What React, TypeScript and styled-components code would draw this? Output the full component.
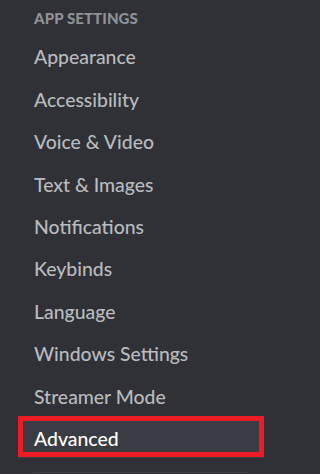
import React from "react";
import styled, { createGlobalStyle } from "styled-components";

const Global = createGlobalStyle`
  html, body {
    margin: 0;
    padding: 0;
    background: #2f3136;
  }
  body {
    font-family: Lato, "Noto Sans", sans-serif;
    -webkit-font-smoothing: antialiased;
  }
`;

const Sidebar = styled.nav`
  width: 275px;
  height: 474px;
  box-sizing: border-box;
  padding-top: 9px;
  background: #2f3136;
  overflow: hidden;
`;

const Header = styled.div`
  margin-left: 34px;
  font-size: 15px;
  line-height: 18px;
  font-weight: 900;
  letter-spacing: 0.1px;
  text-transform: uppercase;
  color: #8e9297;
  margin-bottom: 9.3px;
`;

const List = styled.div`
  display: flex;
  flex-direction: column;
  gap: 2.44px;
`;

const Item = styled.div<{ $selected?: boolean }>`
  position: relative;
  margin-left: 18px;
  width: 246px;
  height: 40px;
  box-sizing: border-box;
  padding-left: 16px;
  padding-top: 1px;
  font-size: 19.4px;
  line-height: 40px;
  font-weight: 500;
  color: ${(p) => (p.$selected ? "#ffffff" : "#b9bbbe")};
  background: ${(p) => (p.$selected ? "#393c43" : "transparent")};
  white-space: nowrap;

  ${(p) =>
    p.$selected &&
    `
    &::after {
      content: "";
      position: absolute;
      left: 0;
      right: 0;
      top: -2px;
      bottom: 1px;
      border: 5px solid #ed1c24;
      pointer-events: none;
    }
  `}
`;

const Separator = styled.div`
  margin: 13.7px 0 0 33px;
  width: 215px;
  height: 1px;
  background: #3c3f45;
`;

const items = [
  "Appearance",
  "Accessibility",
  "Voice & Video",
  "Text & Images",
  "Notifications",
  "Keybinds",
  "Language",
  "Windows Settings",
  "Streamer Mode",
  "Advanced",
];

export default function App() {
  return (
    <>
      <Global />
      <Sidebar>
        <Header>App Settings</Header>
        <List>
          {items.map((label) => (
            <Item key={label} $selected={label === "Advanced"}>
              {label}
            </Item>
          ))}
        </List>
        <Separator />
      </Sidebar>
    </>
  );
}
